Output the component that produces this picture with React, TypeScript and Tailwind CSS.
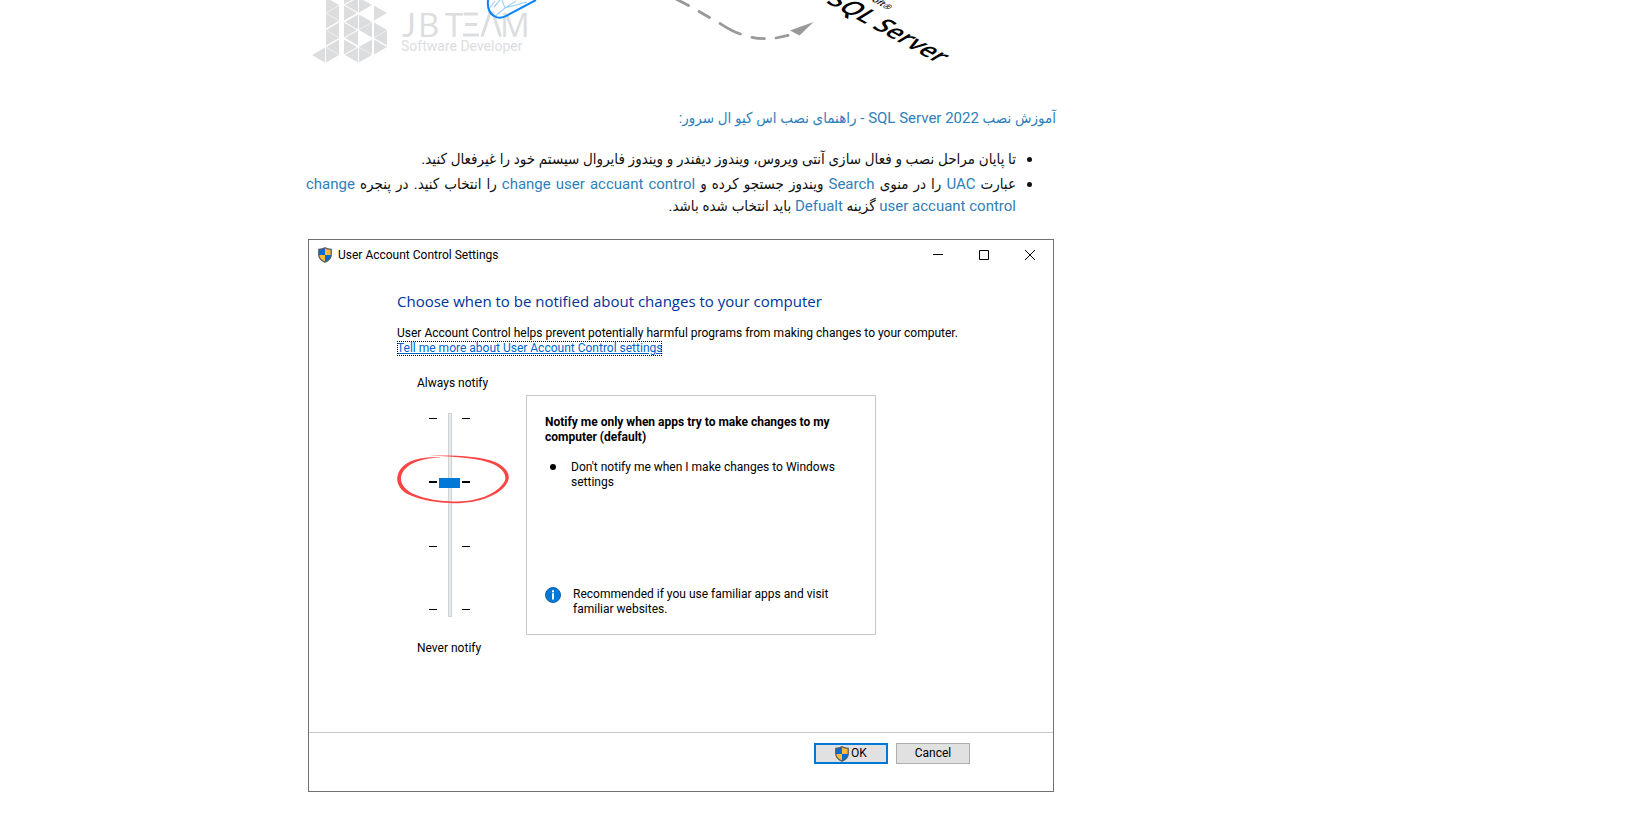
import type { ReactNode } from "react";

type Tri = [dir: "l" | "r", x: number, y: number];

/* Triangles of the JB monogram: direction of the apex, x of the column, y of the centre. */
const monogram: Tri[] = [
  ["l", 6, 55], ["r", 20, 5], ["l", 20, 13], ["r", 20, 21], ["l", 20, 30], ["r", 20, 38], ["l", 20, 47], ["r", 20, 55],
  ["r", 38, -3], ["l", 39, 5], ["r", 38, 13], ["l", 39, 22], ["r", 38, 30], ["l", 39, 38], ["r", 38, 47], ["l", 39, 55],
  ["r", 53, 5], ["r", 53, 22], ["l", 53, 30], ["l", 53, 47], ["r", 53, 55],
  ["r", 68, 13], ["r", 68, 30], ["l", 68, 38], ["r", 68, 47],
];

function triPoints([dir, x, y]: Tri) {
  return dir === "r"
    ? `${x},${y - 7.4} ${x},${y + 7.4} ${x + 13},${y}`
    : `${x + 13},${y - 7.4} ${x + 13},${y + 7.4} ${x},${y}`;
}

function Illustration() {
  return (
    <svg viewBox="0 0 750 70" className="block w-full overflow-hidden" role="img" aria-label="JBTEAM Software Developer, Microsoft SQL Server">
      <g fill="#dcdddf">
        {monogram.map((t) => (
          <polygon key={t.join()} points={triPoints(t)} />
        ))}
      </g>
      <g fill="#dcdddf" fontFamily="'Open Sans', sans-serif">
        <text y="36.500" fontSize="33">
          <tspan x="96" fontFamily="Lato, sans-serif">J</tspan>
          <tspan x="112">B</tspan>
          <tspan x="139">T</tspan>
        </text>
        <path d="M158 14h14M159 24.500h12M157 35h16" stroke="#dcdddf" strokeWidth="3" />
        <path d="M176 36.500L184 13h3l7.500 23.500" fill="none" stroke="#dcdddf" strokeWidth="3" />
        <text x="194" y="36.500" fontSize="33">M</text>
        <text x="95" y="51" fontSize="14" fontFamily="Roboto, sans-serif">Software Developer</text>
      </g>
      <g fill="none">
        <path d="M199 8l-3-8M199 8l11-7M199 8l-11 9M199 8l22-6M188 7l6-7M183 9l6-8" stroke="#9fd0fb" strokeWidth="1.200" />
        <path d="M182 0c-.8 8 1 13 6 16 4 2.500 9 2 13-.5L230 0" stroke="#0a84f5" strokeWidth="2" />
      </g>
      <g stroke="#999" strokeWidth="2.800" strokeLinecap="round" fill="none">
        <path d="M370 -1L382.500 5.500M393 11.500L403.500 17.500M414 23.500C421 28 427 32 434.500 34M446 37.300Q452 38.700 458.500 38.600M470 38L482 35.300" />
      </g>
      <path d="M484 30.500L507.500 22L493.500 35.500Z" fill="#999" />
      <g fontFamily="'Open Sans', sans-serif">
        <text transform="matrix(.86 .47 -.88 .54 519 2)" fontSize="25" fontWeight="600">SQL Server</text>
        <text transform="matrix(.86 .47 -.88 .54 540 -13)" fontSize="9" fontWeight="600">Microsoft®</text>
      </g>
    </svg>
  );
}

function Shield() {
  return (
    <svg viewBox="0 0 14 16" className="h-4 w-3.5 shrink-0" aria-hidden="true">
      <clipPath id="shield">
        <path d="M7 .8C5.200 2 3 2.400.8 2.400V8c0 3.500 3 5.800 6.200 7.200C10.200 13.800 13.200 11.500 13.200 8V2.400C11 2.400 8.800 2 7 .8z" />
      </clipPath>
      <g clipPath="url(#shield)">
        <path d="M0 0h7v8H0zM7 8h7v8H7z" fill="#0c6bd0" />
        <path d="M7 0h7v8H7zM0 8h7v8H0z" fill="#fdbb3d" />
      </g>
      <path d="M7 .8C5.200 2 3 2.400.8 2.400V8c0 3.500 3 5.800 6.200 7.200C10.200 13.800 13.200 11.500 13.200 8V2.400C11 2.400 8.800 2 7 .8z" fill="none" stroke="#555b60" strokeWidth="1.300" />
    </svg>
  );
}

function Term({ children }: { children: ReactNode }) {
  return <span className="text-[#2f80b9]">{children}</span>;
}

function Ticks() {
  return (
    <div className="mb-0.5 flex h-[193px] w-2 flex-col justify-between" aria-hidden="true">
      <span className="h-px bg-black" />
      <span className="h-0.5 bg-black" />
      <span className="h-px bg-black" />
      <span className="h-px bg-black" />
    </div>
  );
}

function NotifySlider() {
  return (
    <div className="flex w-[129px] flex-col">
      <label htmlFor="level" className="pl-5">Always notify</label>
      <div className="relative mt-[22px] flex h-[204px] items-center gap-0.5 pl-8">
        <Ticks />
        <input
          id="level"
          type="range"
          min={0}
          max={3}
          defaultValue={2}
          className="h-[204px] w-[21px] appearance-none bg-[linear-gradient(#e7eaea,#e7eaea),linear-gradient(#d0d3d3,#d0d3d3)] bg-[length:2px_202px,4px_100%] bg-center bg-no-repeat [direction:rtl] [writing-mode:vertical-lr] [&::-webkit-slider-thumb]:h-[10px] [&::-webkit-slider-thumb]:w-[21px] [&::-webkit-slider-thumb]:appearance-none [&::-webkit-slider-thumb]:bg-[#0078d7]"
        />
        <Ticks />
        <svg viewBox="0 0 112 50" className="pointer-events-none absolute top-[41px] left-0 h-[50px] w-28" fill="#fb4545" aria-hidden="true">
          <path d="M32 1.500C60 1 84 2 98 8c10 4.500 15 11 13.500 17.500C108 38 88 48 62 49.200 40 49.500 18 45 8 38.500-1 32-2 22 4 14.500 11 6 26 2.500 44 3.200 27 4 14 8 7.500 15.500c-5 6-5 14 2 20C18 43 38 47.500 60 47.500c24-.5 42-9 48-21C110 20 104 13.500 96 10 82 4 60 3 32 1.500z" />
        </svg>
      </div>
      <p className="mt-6 pl-5">Never notify</p>
    </div>
  );
}

function Dialog() {
  return (
    <section className="mx-0.5 flex h-[553px] flex-col border border-[#707070] font-[Roboto,sans-serif] text-xs leading-[15px] text-black" aria-labelledby="dialog-title">
      <header className="flex h-[30px] items-center pl-[9px]">
        <Shield />
        <h2 id="dialog-title" className="grow pl-1.5">User Account Control Settings</h2>
        <button aria-label="Minimize" className="grid h-7 w-[46px] place-items-center">
          <svg viewBox="0 0 10 10" className="size-2.5"><path d="M0 4.500h10" stroke="#000" /></svg>
        </button>
        <button aria-label="Maximize" className="grid h-7 w-[46px] place-items-center">
          <svg viewBox="0 0 10 10" className="size-2.5"><path d="M.5.5h9v9h-9z" fill="none" stroke="#000" /></svg>
        </button>
        <button aria-label="Close" className="grid h-7 w-[46px] place-items-center">
          <svg viewBox="0 0 10 10" className="size-2.5"><path d="M0 0l10 10M10 0L0 10" stroke="#000" /></svg>
        </button>
      </header>

      <div className="grow px-[88px] pt-[21px]">
        <h3 className="font-['Open_Sans',sans-serif] text-[15px] leading-5 text-[#003399]">
          Choose when to be notified about changes to your computer
        </h3>
        <p className="mt-[15px]">
          User Account Control helps prevent potentially harmful programs from making changes to your computer.
        </p>
        <a href="#uac" className="inline-block text-[#0066cc] underline outline outline-dotted outline-black -outline-offset-1">
          Tell me more about User Account Control settings
        </a>

        <div className="mt-5 flex">
          <NotifySlider />
          <div className="mt-[19px] flex h-60 w-[350px] flex-col border border-[#c8c8c8] px-[18px] pt-[19px] pb-[17px]">
            <h4 className="font-bold">Notify me only when apps try to make changes to my computer (default)</h4>
            <ul className="mt-[15px]">
              <li className="flex gap-[15px] pl-[5px]">
                <span className="mt-1 size-1.5 shrink-0 rounded-full bg-black" />
                <span>Don't notify me when I make changes to Windows settings</span>
              </li>
            </ul>
            <div className="mt-auto flex gap-3 pr-6">
              <svg viewBox="0 0 16 16" className="size-4 shrink-0" aria-hidden="true">
                <circle cx="8" cy="8" r="7.500" fill="#0078d7" stroke="#1464a5" />
                <path d="M7 3.300h2v2H7zM7 6.300h2v6.200H7z" fill="#fff" />
              </svg>
              <p>Recommended if you use familiar apps and visit familiar websites.</p>
            </div>
          </div>
        </div>
      </div>

      <footer className="flex h-[59px] items-start justify-end gap-2 border-t border-[#c8c8c8] pt-2.5 pr-[83px]">
        <button className="flex h-[21px] w-[74px] items-center justify-center gap-0.5 border-2 border-[#0078d7] bg-[#e1e1e1]">
          <Shield />
          OK
        </button>
        <button className="h-[21px] w-[74px] border border-[#adadad] bg-[#e1e1e1]">Cancel</button>
      </footer>
    </section>
  );
}

export default function App() {
  return (
    <div className="mx-auto flex max-w-[1033px] bg-white">
      <main className="min-w-0 grow">
        <Illustration />
        <article dir="rtl" lang="fa" className="font-[Roboto,'DejaVu_Sans_Condensed',sans-serif] text-[15px] leading-[22px] text-[#111]">
          <h1 className="pt-[37px] text-[#2f80b9]">آموزش نصب SQL Server 2022 - راهنمای نصب اس کیو ال سرور:</h1>
          <ul className="mt-[19px] flex list-disc flex-col gap-[3px] pr-10 text-justify">
            <li>تا پایان مراحل نصب و فعال سازی آنتی ویروس، ویندوز دیفندر و ویندوز فایروال سیستم خود را غیرفعال کنید.</li>
            <li>
              عبارت <Term>UAC</Term> را در منوی <Term>Search</Term> ویندوز جستجو کرده و <Term>change user accuant control</Term> را انتخاب کنید. در پنجره <Term>change user accuant control</Term> گزینه <Term>Defualt</Term> باید انتخاب شده باشد.
            </li>
          </ul>
        </article>
        <div className="pt-[22px]">
          <Dialog />
        </div>
      </main>
      <aside className="w-[283px] shrink-0" />
    </div>
  );
}
